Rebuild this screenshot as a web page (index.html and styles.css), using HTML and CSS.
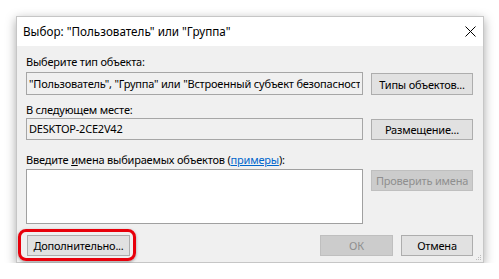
FILE: index.html
```html
<!DOCTYPE html>
<html lang="ru">
<head>
<meta charset="utf-8">
<title>Выбор</title>
<link rel="stylesheet" href="styles.css">
</head>
<body>
<div class="dialog">
  <div class="titlebar">
    <span class="title">Выбор: "Пользователь" или "Группа"</span>
    <svg class="close" width="11" height="11" viewBox="0 0 11 11"><path d="M0.5 0.5L10.5 10.5M10.5 0.5L0.5 10.5" stroke="#000" stroke-width="1" fill="none"/></svg>
  </div>
  <div class="content">
    <div class="label l1">Выберите тип объекта:</div>
    <div class="row r1">
      <div class="field f1"><span class="clip">"Пользователь", "Группа" или "Встроенный субъект безопасности"</span></div>
      <div class="btn b1">Типы объектов...</div>
    </div>
    <div class="label l2">В следующем месте:</div>
    <div class="row r2">
      <div class="field f2">DESKTOP-2CE2V42</div>
      <div class="btn b2">Размещение...</div>
    </div>
    <div class="label l3">Введите <u>и</u>мена выбираемых объектов (<a class="link">примеры</a>):</div>
    <div class="row r3">
      <div class="textarea"></div>
      <div class="btn b3 disabled">Проверить имена</div>
    </div>
    <div class="row footer">
      <div class="adv-wrap">
        <div class="btn adv">Дополнительно...</div>
        <div class="highlight"></div>
      </div>
      <div class="spacer"></div>
      <div class="btn ok disabled">ОК</div>
      <div class="btn cancel">Отмена</div>
    </div>
  </div>
  <svg class="grip" width="6" height="6" viewBox="0 0 6 6"><g fill="#bdbdbd"><rect x="4" y="0" width="1" height="1"/><rect x="2" y="2" width="1" height="1"/><rect x="4" y="2" width="1" height="1"/><rect x="0" y="4" width="1" height="1"/><rect x="2" y="4" width="1" height="1"/><rect x="4" y="4" width="1" height="1"/></g></svg>
</div>
</body>
</html>
```
FILE: styles.css
```css
html, body {
  margin: 0;
  padding: 0;
  background: #ffffff;
}
body {
  padding: 16px 0 0 16px;
  font-family: "Noto Sans", "Liberation Sans", sans-serif;
  font-size: 11px;
  letter-spacing: -0.2px;
  color: #000;
}
.dialog {
  position: relative;
  width: 468px;
  height: 247px;
  box-sizing: border-box;
  background: #f0f0f0;
  border: 1px solid #c6c6c6;
  box-shadow: 0 3px 10px rgba(0,0,0,0.35);
  display: flex;
  flex-direction: column;
}
.titlebar {
  height: 29px;
  background: #ffffff;
  display: flex;
  align-items: center;
  padding: 0 7px 0 6px;
}
.title {
  flex: 1;
  font-size: 11.7px;
  letter-spacing: 0;
  line-height: 16px;
  white-space: nowrap;
  margin-top: -1px;
}
.close {
  display: block;
  margin-top: -1px;
}
.content {
  padding: 8px 10px 0 9px;
  display: flex;
  flex-direction: column;
}
.label {
  line-height: 16px;
  height: 16px;
  white-space: nowrap;
}
.l2 { margin-top: 7px; }
.l3 { margin-top: 12px; }
.row {
  display: flex;
  align-items: flex-start;
  gap: 8px;
}
.r1 { margin-top: 2px; }
.field {
  box-sizing: border-box;
  width: 337px;
  border: 1px solid #a6a6a6;
  background: #f0f0f0;
  padding: 0 2px;
  white-space: nowrap;
  overflow: hidden;
  line-height: 20px;
}
.clip {
  display: block;
  overflow: hidden;
  white-space: nowrap;
}
.f1 { height: 23px; line-height: 21px; }
.f2 { height: 22px; }
.textarea {
  box-sizing: border-box;
  width: 337px;
  height: 55px;
  margin-top: 1px;
  background: #fff;
  border: 1px solid #a0a0a0;
}
.btn {
  box-sizing: border-box;
  width: 102px;
  height: 21px;
  margin-top: 1px;
  background: #e1e1e1;
  border: 1px solid #adadad;
  display: flex;
  align-items: center;
  justify-content: center;
  white-space: nowrap;
}
.b1 { height: 22px; }
.b3 { margin-top: 2px; }
.disabled {
  background: #cccccc;
  border-color: #bfbfbf;
  color: #8f8f8f;
}
.link {
  color: #0066cc;
  text-decoration: underline;
}
.footer {
  margin-top: 11px;
  gap: 0;
}
.adv-wrap {
  position: relative;
  margin-left: 1px;
}
.adv {
  width: 103px;
  margin-top: 0;
}
.highlight {
  position: absolute;
  left: -9px;
  top: -6px;
  right: -6px;
  bottom: -5px;
  border: 3px solid #e8000b;
  border-radius: 8px;
  box-shadow: 0 1px 3px rgba(0,0,0,0.35);
}
.spacer { flex: 1; }
.ok {
  width: 73px;
  margin-top: 0;
  margin-right: 8px;
}
.cancel {
  width: 72px;
  margin-top: 0;
}
.grip {
  position: absolute;
  right: 1px;
  bottom: 1px;
}
```
